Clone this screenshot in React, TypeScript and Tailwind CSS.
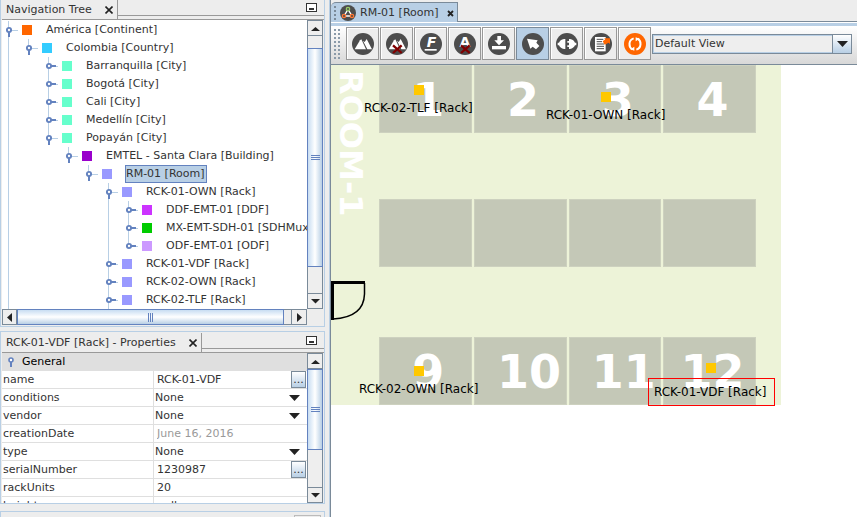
import type { ReactNode } from "react";

type TreeItem = {
  label: string;
  depth: number;
  color: string;
  open?: boolean;
  selected?: boolean;
  last?: boolean;
  guides: number[];
};

const tree: TreeItem[] = [
  { label: "América [Continent]", depth: 0, color: "bg-[#ff6600]", open: true, guides: [] },
  { label: "Colombia [Country]", depth: 1, color: "bg-[#33ccff]", open: true, last: true, guides: [0] },
  { label: "Barranquilla [City]", depth: 2, color: "bg-[#66ffcc]", guides: [0] },
  { label: "Bogotá [City]", depth: 2, color: "bg-[#66ffcc]", guides: [0] },
  { label: "Cali [City]", depth: 2, color: "bg-[#66ffcc]", guides: [0] },
  { label: "Medellín [City]", depth: 2, color: "bg-[#66ffcc]", guides: [0] },
  { label: "Popayán [City]", depth: 2, color: "bg-[#66ffcc]", open: true, last: true, guides: [0] },
  { label: "EMTEL - Santa Clara [Building]", depth: 3, color: "bg-[#9900cc]", open: true, last: true, guides: [0] },
  { label: "RM-01 [Room]", depth: 4, color: "bg-[#9999ff]", open: true, selected: true, last: true, guides: [0] },
  { label: "RCK-01-OWN [Rack]", depth: 5, color: "bg-[#9999ff]", open: true, guides: [0] },
  { label: "DDF-EMT-01 [DDF]", depth: 6, color: "bg-[#cc33ff]", guides: [0, 5] },
  { label: "MX-EMT-SDH-01 [SDHMux]", depth: 6, color: "bg-[#00cc00]", guides: [0, 5] },
  { label: "ODF-EMT-01 [ODF]", depth: 6, color: "bg-[#cc99ff]", last: true, guides: [0, 5] },
  { label: "RCK-01-VDF [Rack]", depth: 5, color: "bg-[#9999ff]", guides: [0] },
  { label: "RCK-02-OWN [Rack]", depth: 5, color: "bg-[#9999ff]", guides: [0] },
  { label: "RCK-02-TLF [Rack]", depth: 5, color: "bg-[#9999ff]", guides: [0] },
];

function TreeRow({ item }: { item: TreeItem }) {
  const x = item.depth * 20 + 6;
  const width = item.depth * 20 + 20;
  return (
    <li className="flex h-[18px] items-center whitespace-nowrap">
      <svg width={width} height={18} className="shrink-0" aria-hidden="true" shapeRendering="crispEdges">
        {item.guides.map((g) => (
          <rect key={g} x={g * 20 + 6} y={0} width={1} height={18} fill="#b8cfe5" />
        ))}
        <rect x={x} y={0} width={1} height={item.last ? 9 : 18} fill="#b8cfe5" />
        <rect x={x} y={9} width={10} height={1} fill="#b8cfe5" />
        {item.open ? (
          <rect x={x} y={11} width={2} height={5} fill="#6382bf" />
        ) : (
          <rect x={x + 3} y={8} width={5} height={2} fill="#6382bf" />
        )}
        <circle cx={x + 1} cy={9} r={2.1} fill="#fff" stroke="#6382bf" strokeWidth={1.9} shapeRendering="auto" />
      </svg>
      <span className={"size-[10px] shrink-0 " + item.color} />
      {item.selected ? (
        <span className="ml-[13px] h-[18px] border border-[#6382bf] bg-[#b8cfe5] pr-px leading-4">{item.label}</span>
      ) : (
        <span className="ml-[14px] leading-[18px]">{item.label}</span>
      )}
    </li>
  );
}

function Triangle({ dir }: { dir: "up" | "down" | "left" | "right" }) {
  const paths = {
    up: "M0 7 L4.500 3 L9 7Z",
    down: "M0 2 L4.500 6.500 L9 2Z",
    left: "M7 0 V9 L2 4.500Z",
    right: "M2 0 V9 L7 4.500Z",
  };
  return (
    <svg width={9} height={9} aria-hidden="true">
      <path d={paths[dir]} fill="#222" />
    </svg>
  );
}

const arrowButton = "flex shrink-0 items-center justify-center border border-[#7a8a99] bg-[#eee]";

function VerticalScroll({ before, thumb }: { before: string; thumb: string }) {
  return (
    <div className="flex w-4 shrink-0 flex-col border-l border-[#7a8a99] bg-[#eee]">
      <button aria-label="Scroll up" className={arrowButton + " h-4 w-full border-l-0"}>
        <Triangle dir="up" />
      </button>
      <div className={"shrink-0 border-r border-[#7a8a99] " + before} />
      <div
        className={
          "-ml-px flex flex-col items-center justify-center gap-px border border-[#6382bf] bg-linear-to-r from-[#c8ddf2] via-white to-[#b8cfe5] " +
          thumb
        }
      >
        <span className="h-px w-[9px] bg-[#6382bf]" />
        <span className="h-px w-[9px] bg-[#6382bf]" />
        <span className="h-px w-[9px] bg-[#6382bf]" />
      </div>
      <div className="min-h-0 flex-1 border-r border-[#7a8a99]" />
      <button aria-label="Scroll down" className={arrowButton + " h-4 w-full border-l-0"}>
        <Triangle dir="down" />
      </button>
    </div>
  );
}

function PanelHeader({ title }: { title: string }) {
  return (
    <div className="flex h-5 shrink-0 border-b border-[#999]">
      <div className="flex items-center border-r border-[#999] pr-[3px] pl-1">
        <h2 className="leading-4">{title}</h2>
        <button aria-label={"Close " + title} className="ml-3 flex size-[10px] items-center justify-center">
          <svg width={8} height={8} aria-hidden="true">
            <path d="M0.500 0.500 L7.500 7.500 M7.500 0.500 L0.500 7.500" stroke="#222" strokeWidth={1.600} />
          </svg>
        </button>
      </div>
      <div className="mb-[3px] flex flex-1 items-center justify-end border-b border-[#999] pr-[7px]">
        <button aria-label={"Minimize " + title} className="flex h-[9px] w-[11px] items-end justify-center border border-[#333] bg-white pb-px">
          <span className="h-[2px] w-[5px] bg-[#333]" />
        </button>
      </div>
    </div>
  );
}

type Property = { name: string; value: string; kind: "text" | "select" | "readonly" | "plain" };

const properties: Property[] = [
  { name: "name", value: "RCK-01-VDF", kind: "text" },
  { name: "conditions", value: "None", kind: "select" },
  { name: "vendor", value: "None", kind: "select" },
  { name: "creationDate", value: "June 16, 2016", kind: "readonly" },
  { name: "type", value: "None", kind: "select" },
  { name: "serialNumber", value: "1230987", kind: "text" },
  { name: "rackUnits", value: "20", kind: "plain" },
  { name: "height", value: "null", kind: "plain" },
];

function PropertyValue({ p }: { p: Property }) {
  if (p.kind === "select") {
    return (
      <div className="relative h-[17px]">
        <select id={p.name} className="block h-[17px] w-full appearance-none pl-px leading-[17px] outline-none">
          <option>{p.value}</option>
        </select>
        <svg width={11} height={6} className="pointer-events-none absolute top-1.5 right-[7px]" aria-hidden="true">
          <path d="M0 0 H11 L5.500 6Z" fill="#222" />
        </svg>
      </div>
    );
  }
  return (
    <div className="flex h-[17px] pr-px pl-[3px]">
      <input
        id={p.name}
        defaultValue={p.value}
        readOnly={p.kind === "readonly"}
        className={"h-[17px] min-w-0 flex-1 bg-transparent outline-none " + (p.kind === "readonly" ? "text-[#999]" : "")}
      />
      {p.kind === "text" && (
        <button
          aria-label={"Edit " + p.name}
          className="h-[17px] w-[15px] shrink-0 border border-[#7a8a99] bg-linear-to-b from-white to-[#b8cfe5] leading-[14px]"
        >
          ...
        </button>
      )}
    </div>
  );
}

function ToolIcon({ children, color = "#4d4d4d" }: { children: ReactNode; color?: string }) {
  return (
    <svg width={22} height={22} viewBox="0 0 66 66" aria-hidden="true">
      <circle cx={33} cy={33} r={33} fill={color} />
      {children}
    </svg>
  );
}

const Mountains = () => (
  <g fill="#fff">
    <path d="M8 49 L24 22 L28 19 L42 49Z" />
    <path d="M33 23 L38 27 L44 18 L60 49 H46Z" />
  </g>
);

const Cross = () => <path d="M21 37 L47 60 M47 37 L21 60" stroke="#800000" strokeWidth={7} />;

const tools: { label: string; icon: ReactNode; active?: boolean }[] = [
  { label: "Set background", icon: <ToolIcon><Mountains /></ToolIcon> },
  { label: "Remove background", icon: <ToolIcon><Mountains /><Cross /></ToolIcon> },
  {
    label: "Add frame",
    icon: (
      <ToolIcon>
        <text x={20} y={43} fontFamily="DejaVu Sans" fontSize={42} fontWeight={700} fontStyle="italic" fill="#fff">F</text>
        <rect x={14} y={48} width={36} height={5} fill="#fff" />
      </ToolIcon>
    ),
  },
  {
    label: "Hide labels",
    icon: (
      <ToolIcon>
        <text x={33} y={43} textAnchor="middle" fontFamily="DejaVu Sans" fontSize={42} fontWeight={700} fill="#fff">A</text>
        <Cross />
      </ToolIcon>
    ),
  },
  {
    label: "Save",
    icon: (
      <ToolIcon>
        <path d="M28 9 H39 V22 H48 L33 37 L19 22 H28Z" fill="#fff" />
        <path d="M12 39 H54 V49 H12Z" fill="#fff" />
      </ToolIcon>
    ),
  },
  {
    label: "Select",
    active: true,
    icon: (
      <ToolIcon>
        <path d="M15 17 L47 22 L43 29 L52 39 L42 49 L32 41 L25 47Z" fill="#fff" />
      </ToolIcon>
    ),
  },
  {
    label: "Connect",
    icon: (
      <ToolIcon>
        <path d="M28 18 V48 H24 C16 47 11 42 9 37 H5 V29 H9 C11 24 16 19 24 18Z" fill="#fff" />
        <path d="M39 18 H42 C50 19 55 24 57 29 H61 V37 H57 C55 42 50 47 42 48 H39 V42 H34 V37 H39 V29 H34 V24 H39Z" fill="#fff" />
      </ToolIcon>
    ),
  },
  {
    label: "Export",
    icon: (
      <ToolIcon>
        <rect x={15} y={12} width={32} height={43} fill="#fff" />
        <path d="M20 19 H40 M20 26 H36 M20 33 H42 M20 40 H42 M20 47 H42" stroke="#4d4d4d" strokeWidth={3} />
        <path d="M38 25 L46 19 L42 16 H60 V33 L56 29 L44 35Z" fill="#ff6600" />
      </ToolIcon>
    ),
  },
  {
    label: "Refresh",
    icon: (
      <ToolIcon color="#ff6600">
        <g fill="none" stroke="#fff" strokeWidth={6}>
          <path d="M29 16 C13 21 13 42 25 49" />
          <path d="M37 50 C53 45 53 24 41 17" />
        </g>
        <path d="M19 49 L31 53 V41Z M47 17 L35 13 V25Z" fill="#fff" />
      </ToolIcon>
    ),
  },
];

const racks = [
  { cells: ["1", "2", "3", "4"], space: "mb-[66px]" },
  { cells: ["", "", "", ""], space: "mb-[70px]" },
  { cells: ["9", "10", "11", "12"], space: "" },
];

const markers = [
  { label: "RCK-02-TLF [Rack]", dot: "left-[83px] top-[20px]", text: "left-[33px] top-[35px]" },
  { label: "RCK-01-OWN [Rack]", dot: "left-[270px] top-[27px]", text: "left-[215px] top-[42px]" },
  { label: "RCK-02-OWN [Rack]", dot: "left-[83px] top-[301px]", text: "left-[28px] top-[316px]" },
  { label: "RCK-01-VDF [Rack]", dot: "left-[375px] top-[298px]", text: "left-[317px] top-[313px] border border-[#ff0000] py-[5px] pr-2 pl-[5px]" },
];

function FloorPlan() {
  return (
    <div className="relative h-[340px] w-[450px] bg-[#edf3d8]">
      <div className="ml-12 w-[377px]">
        {racks.map((row, r) => (
          <div key={r} className={"grid grid-cols-4 gap-[2px] " + row.space}>
            {row.cells.map((n, i) => (
              <div
                key={i}
                className={
                  "flex h-[68px] items-center justify-center border border-[#cdd1bf] bg-[#c4c8b7] pt-[2px] font-bold text-white text-[46px] leading-[68px] " +
                  (n === "10" || n === "11" ? "pl-[18px]" : "pl-1.5")
                }
              >
                {n}
              </div>
            ))}
          </div>
        ))}
      </div>
      <div className="absolute top-[5px] left-1 text-[32px] leading-8 font-bold text-white [writing-mode:vertical-rl]">ROOM-1</div>
      <svg width={36} height={42} className="absolute top-[215px] left-0" aria-hidden="true">
        <path d="M0 2.500 H34" stroke="#000" strokeWidth={3} />
        <path d="M1.500 1 V40" stroke="#000" strokeWidth={3} />
        <path d="M33.500 3 V14 C33 31 21 38 2 39" fill="none" stroke="#000" strokeWidth={1.500} />
      </svg>
      {markers.map((m) => (
        <div key={m.label}>
          <span className={"absolute size-[10px] bg-[#ffc800] " + m.dot} />
          <span className={"absolute text-xs leading-4 whitespace-nowrap text-black " + m.text}>{m.label}</span>
        </div>
      ))}
    </div>
  );
}

export default function App() {
  return (
    <div className="flex h-screen overflow-hidden bg-[#ededed] font-['DejaVu_Sans',sans-serif] text-[11px] text-[#333]">
      <aside className="flex w-[325px] shrink-0 flex-col gap-1">
        <section className="shrink-0 border-x border-b border-[#b8cfe5] pl-px">
          <PanelHeader title="Navigation Tree" />
          <div className="flex h-[289px] bg-white">
            <ul className="min-w-0 flex-1 overflow-hidden pt-px">
              {tree.map((item) => (
                <TreeRow key={item.label} item={item} />
              ))}
            </ul>
            <VerticalScroll before="h-[12px]" thumb="h-[219px]" />
            <span className="w-px bg-[#eee]" />
          </div>
          <div className="flex h-[17px] pr-[17px]">
            <button aria-label="Scroll left" className={arrowButton + " h-4 w-[15px]"}>
              <Triangle dir="left" />
            </button>
            <div className="flex h-4 flex-1 items-center justify-center gap-px border border-[#6382bf] bg-linear-to-b from-[#c8ddf2] via-white to-[#b8cfe5]">
              <span className="h-[9px] w-px bg-[#6382bf]" />
              <span className="h-[9px] w-px bg-[#6382bf]" />
              <span className="h-[9px] w-px bg-[#6382bf]" />
            </div>
            <span className="h-4 w-[7px] border-y border-[#7a8a99]" />
            <button aria-label="Scroll right" className={arrowButton + " h-4 w-4"}>
              <Triangle dir="right" />
            </button>
          </div>
        </section>

        <section className="flex min-h-0 flex-1 flex-col border border-[#b8cfe5] pt-px pl-px">
          <PanelHeader title="RCK-01-VDF [Rack] - Properties" />
          <div className="flex min-h-0 flex-1 bg-white">
            <div className="min-w-0 flex-1 overflow-hidden">
              <div className="flex h-[18px] items-center bg-[#dfdfdf] pl-1 text-black">
                <svg width={10} height={10} aria-hidden="true">
                  <path d="M5 5 V10" stroke="#6382bf" strokeWidth={2} />
                  <circle cx={5} cy={3} r={2} fill="#fff" stroke="#6382bf" strokeWidth={1.600} />
                </svg>
                <h3 className="ml-1.5 leading-4">General</h3>
              </div>
              <table className="w-full table-fixed border-separate border-spacing-0">
                <tbody>
                  {properties.map((p) => (
                    <tr key={p.name} className="h-[18px]">
                      <th scope="row" className="w-[152px] border-r border-b border-[#dfdfdf] p-0 pl-px text-left leading-[17px] font-normal">
                        <label htmlFor={p.name}>{p.name}</label>
                      </th>
                      <td className="border-b border-[#dfdfdf] p-0">
                        <PropertyValue p={p} />
                      </td>
                    </tr>
                  ))}
                </tbody>
              </table>
            </div>
            <VerticalScroll before="h-0" thumb="h-[81px]" />
            <span className="w-px bg-[#eee]" />
          </div>
        </section>

        <div className="mt-[3px] flex h-[6px] shrink-0 justify-end border-x border-t border-[#b8cfe5] pt-[3px] pr-[3px]">
          <span className="w-[27px] border border-b-0 border-[#bbb]" />
        </div>
      </aside>

      <main className="ml-1 flex min-w-0 flex-1 flex-col border-l border-[#b8cfe5]">
        <div className="flex min-h-0 flex-1 flex-col border-l border-[#7a8a99]">
          <div className="flex h-[22px] shrink-0 pt-[2px]">
            <div className="flex items-center rounded-tl-[5px] border-t border-r border-[#7a8a99] bg-[#b8cfe5] pr-[2px] pl-[2px]">
              <span className="h-[15px] w-1 bg-[radial-gradient(#7a8a99_1px,transparent_1px)] bg-size-[4px_4px]" />
              <svg width={16} height={16} viewBox="0 0 48 48" className="ml-[3px]" aria-hidden="true">
                <circle cx={24} cy={24} r={24} fill="#4d4d4d" />
                <path d="M24 13 L12 33 H36Z" fill="none" stroke="#fff" strokeWidth={4} />
                <circle cx={24} cy={12} r={5} fill="#4d4d4d" stroke="#9c6" strokeWidth={4} />
                <circle cx={12} cy={33} r={5} fill="#4d4d4d" stroke="#f73" strokeWidth={4} />
                <circle cx={36} cy={33} r={5} fill="#4d4d4d" stroke="#f73" strokeWidth={4} />
              </svg>
              <h1 className="ml-1 leading-4">RM-01 [Room]</h1>
              <button aria-label="Close RM-01 [Room]" className="ml-2 flex h-[10px] w-2 items-center">
                <svg width={7} height={7} className="mt-px" aria-hidden="true">
                  <path d="M1 1 L6 6 M6 1 L1 6" stroke="#222" strokeWidth={1.800} />
                </svg>
              </button>
            </div>
            <div className="flex-1 border-b border-[#7a8a99]" />
          </div>
          <div className="h-1 shrink-0 border-t border-white bg-[#b8cfe5]" />
          <div className="flex h-[39px] shrink-0 items-start border-b border-[#7a8a99] bg-linear-to-b from-white to-[#d8d8d8] pt-px pr-[5px] pl-[2px]">
            <span className="mt-px mr-1 h-[33px] w-[9px] shrink-0 bg-[radial-gradient(#8a9aa9_1px,transparent_1px)] bg-size-[4px_4px]" />
            <div className="flex gap-px">
              {tools.map((t) => (
                <button
                  key={t.label}
                  aria-label={t.label}
                  className={
                    "flex size-[33px] shrink-0 items-center justify-center border " +
                    (t.active ? "border-[#7a8a99] bg-[#b8cfe5]" : "border-[#999] bg-[#ededed] shadow-[inset_1px_1px_0_#fff]")
                  }
                >
                  {t.icon}
                </button>
              ))}
            </div>
            <div className="relative mt-[7px] ml-px h-5 min-w-0 flex-1">
              <select
                aria-label="View"
                className="h-5 w-full appearance-none border border-[#7a8a99] bg-[#eee] pl-[2px] leading-4 shadow-[inset_0_0_0_1px_#b8cfe5] outline-none"
              >
                <option>Default View</option>
              </select>
              <span className="pointer-events-none absolute top-0 right-0 flex h-5 w-5 items-center justify-center border border-[#7a8a99] bg-linear-to-b from-white to-[#b8cfe5]">
                <svg width={11} height={6} aria-hidden="true">
                  <path d="M0 0 H11 L5.500 6Z" fill="#222" />
                </svg>
              </span>
            </div>
          </div>
          <div className="min-h-0 flex-1 overflow-hidden bg-white">
            <FloorPlan />
          </div>
        </div>
      </main>
    </div>
  );
}
